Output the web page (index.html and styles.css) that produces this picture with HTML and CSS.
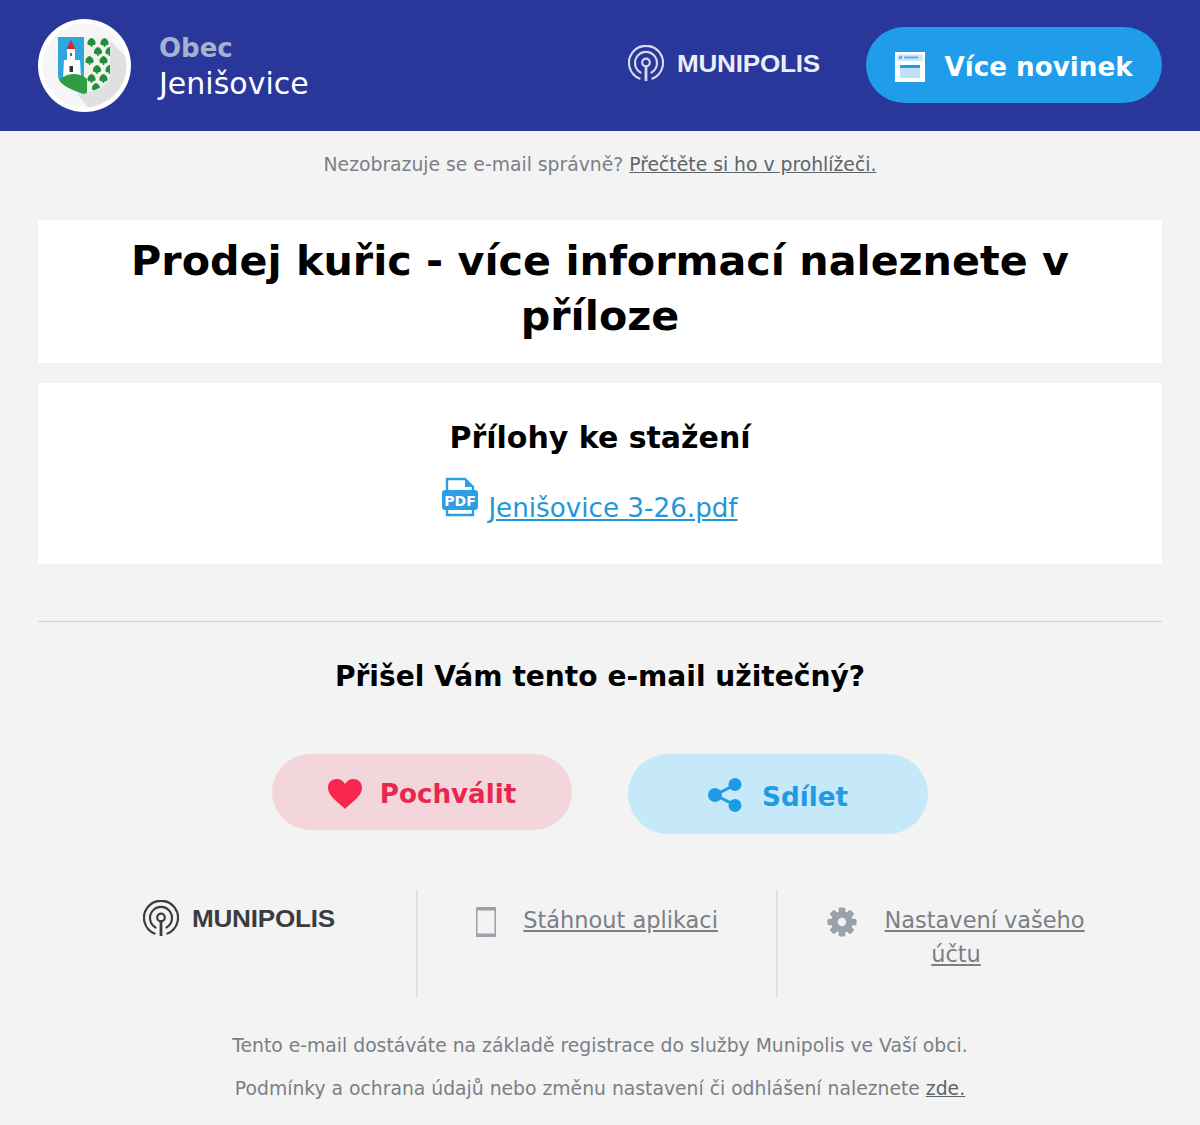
FILE: index.html
```html
<!DOCTYPE html>
<html lang="cs">
<head>
<meta charset="utf-8">
<title>Prodej kuřic</title>
<link rel="stylesheet" href="styles.css">
</head>
<body>
<svg class="sprites" width="0" height="0" aria-hidden="true">
  <defs>
    <symbol id="tree" viewBox="0 0 12 12">
      <path d="M6 0C9 1 11.500 4 11.500 7C11.500 9 9.500 10 7 10V12H5V10C2.500 10 .5 9 .5 7C.5 4 3 1 6 0Z"/>
    </symbol>
    <symbol id="munipolis-mark" viewBox="0 0 36 36">
      <g fill="none" stroke="currentColor" stroke-width="2.200" stroke-linecap="round">
        <path d="M11.500 33.500A17 17 0 1 1 24.500 33.500"/>
        <path d="M12.500 27.500A11 11 0 1 1 23.500 27.500"/>
        <circle cx="18" cy="17.500" r="3.800"/>
        <path d="M18 21.500V35.500" stroke-width="2.800"/>
      </g>
    </symbol>
  </defs>
</svg>

<header class="header">
  <div class="brand">
    <svg class="crest" viewBox="0 0 93 93" width="93" height="93" aria-hidden="true">
      <defs>
        <clipPath id="disc-inner"><circle cx="46.500" cy="46.500" r="42"/></clipPath>
        <clipPath id="shield"><path d="M20 18H72V56C72 66 58 71 46 75C34 71 20 66 20 56Z"/></clipPath>
      </defs>
      <circle cx="46.500" cy="46.500" r="46.500" fill="#fff"/>
      <circle cx="46.500" cy="46.500" r="42" fill="#f6f6f6"/>
      <path clip-path="url(#disc-inner)" d="M72 22L100 50V100H60L40 76Z" fill="#e0e0e0"/>
      <g clip-path="url(#shield)">
        <rect x="20" y="18" width="26" height="58" fill="#2ea8dc"/>
        <rect x="46" y="18" width="26" height="58" fill="#f2f2ea"/>
        <path d="M26 41H42L43 60H25Z" fill="#fff"/>
        <rect x="29" y="29" width="8" height="13" fill="#fff"/>
        <path d="M28.500 30L33 21L37.500 30Z" fill="#d42a2f"/>
        <rect x="31.500" y="47" width="3.500" height="6" fill="#333"/>
        <rect x="32" y="34" width="2" height="3" fill="#666"/>
        <path d="M20 62C28 54 40 52 49 60V76H20Z" fill="#2f9e43"/>
        <g fill="#1f8f3f">
          <use href="#tree" x="49" y="19" width="9" height="9"/>
          <use href="#tree" x="62" y="19" width="9" height="9"/>
          <use href="#tree" x="55.500" y="28" width="9" height="9"/>
          <use href="#tree" x="67" y="28" width="9" height="9"/>
          <use href="#tree" x="47" y="37" width="9" height="9"/>
          <use href="#tree" x="61" y="37" width="9" height="9"/>
          <use href="#tree" x="54.500" y="46" width="9" height="9"/>
          <use href="#tree" x="67" y="46" width="9" height="9"/>
          <use href="#tree" x="49" y="55" width="9" height="9"/>
          <use href="#tree" x="61" y="55" width="9" height="9"/>
          <use href="#tree" x="53.500" y="64" width="9" height="9"/>
        </g>
      </g>
    </svg>
    <div class="brand-text">
      <div class="brand-label">Obec</div>
      <div class="brand-name">Jenišovice</div>
    </div>
  </div>
  <div class="header-right">
    <div class="logo logo-light">
      <svg width="36" height="36" aria-hidden="true"><use href="#munipolis-mark"/></svg>
      <span class="logo-word">MUNIPOLIS</span>
    </div>
    <a class="more-btn" href="#">
      <svg viewBox="0 0 30 30" width="30" height="30" aria-hidden="true">
        <rect width="30" height="30" fill="#fff"/>
        <rect x="2" y="2.500" width="26" height="6.500" fill="#cfe7fa"/>
        <rect x="4" y="4.500" width="3" height="2" fill="#1f9cea"/>
        <rect x="9" y="4.500" width="14" height="2" fill="#1f9cea" opacity=".7"/>
        <rect x="5" y="13" width="20" height="13" fill="#1f9cea"/>
        <rect x="5" y="16" width="20" height="10" fill="#bfe0f8"/>
      </svg>
      <span>Více novinek</span>
    </a>
  </div>
</header>

<main class="page">
  <p class="browser-note">Nezobrazuje se e-mail správně? <a href="#">Přečtěte si ho v prohlížeči.</a></p>

  <section class="card title-card">
    <h1>Prodej kuřic - více informací naleznete v příloze</h1>
  </section>

  <section class="card files-card">
    <h2>Přílohy ke stažení</h2>
    <div class="file-row">
      <svg class="pdf-icon" viewBox="0 0 36 40" width="36" height="40" aria-hidden="true">
        <path fill="none" stroke="#2ba0e6" stroke-width="2.400" d="M5 14V2H23L31 10V14M5 32V38H31V32"/>
        <path fill="#2ba0e6" d="M23 2V10H31Z"/>
        <rect x="0" y="13" width="36" height="20" rx="3" fill="#2ba0e6"/>
        <text class="pdf-label" x="18" y="28.500" text-anchor="middle">PDF</text>
      </svg>
      <a class="file-link" href="#">Jenišovice 3-26.pdf</a>
    </div>
  </section>

  <hr class="rule">

  <h3 class="question">Přišel Vám tento e-mail užitečný?</h3>

  <div class="actions">
    <a class="pill pill-praise" href="#">
      <svg viewBox="0 0 34 30" width="34" height="30" aria-hidden="true">
        <path fill="#f9274f" d="M17 30C13 25 0 18 0 9C0 3 4 0 9 0C12.500 0 15.500 2 17 5C18.500 2 21.500 0 25 0C30 0 34 3 34 9C34 18 21 25 17 30Z"/>
      </svg>
      <span>Pochválit</span>
    </a>
    <a class="pill pill-share" href="#">
      <svg viewBox="0 0 34 34" width="34" height="34" aria-hidden="true">
        <path fill="none" stroke="#1f9be6" stroke-width="3" d="M27 7L7 17L27 27"/>
        <g fill="#1f9be6">
          <circle cx="27" cy="6.500" r="6.500"/><circle cx="7" cy="17" r="7"/><circle cx="27" cy="27.500" r="6.500"/>
        </g>
      </svg>
      <span>Sdílet</span>
    </a>
  </div>

  <div class="footer-cols">
    <div class="fcol-logo">
      <div class="logo logo-dark">
        <svg width="36" height="36" aria-hidden="true"><use href="#munipolis-mark"/></svg>
        <span class="logo-word">MUNIPOLIS</span>
      </div>
    </div>
    <div class="fcol-link">
      <svg class="foot-icon" viewBox="0 0 20 30" width="20" height="30" aria-hidden="true">
        <path fill="#9aa1a9" fill-rule="evenodd" d="M1 0H19A1 1 0 0 1 20 1V29A1 1 0 0 1 19 30H1A1 1 0 0 1 0 29V1A1 1 0 0 1 1 0ZM1.500 3.500V26.500H18.500V3.500Z"/>
      </svg>
      <a class="foot-link" href="#">Stáhnout aplikaci</a>
    </div>
    <div class="fcol-link fcol-settings">
      <svg class="foot-icon" viewBox="0 0 32 32" width="30" height="30" aria-hidden="true">
        <g fill="#9aa1a9">
          <circle cx="16" cy="16" r="11.500"/>
          <rect x="12.500" y=".5" width="7" height="31" rx="1.500"/>
          <rect x="12.500" y=".5" width="7" height="31" rx="1.500" transform="rotate(45 16 16)"/>
          <rect x="12.500" y=".5" width="7" height="31" rx="1.500" transform="rotate(90 16 16)"/>
          <rect x="12.500" y=".5" width="7" height="31" rx="1.500" transform="rotate(135 16 16)"/>
        </g>
        <circle cx="16" cy="16" r="4.500" fill="#f3f3f4"/>
      </svg>
      <a class="foot-link" href="#">Nastavení vašeho účtu</a>
    </div>
  </div>

  <p class="legal">Tento e-mail dostáváte na základě registrace do služby Munipolis ve Vaší obci.</p>
  <p class="legal">Podmínky a ochrana údajů nebo změnu nastavení či odhlášení naleznete <a href="#">zde.</a></p>
</main>
</body>
</html>
```

FILE: styles.css
```css
* { box-sizing: border-box; }

html, body { margin: 0; padding: 0; }

body {
  width: 1200px;
  height: 1125px;
  overflow: hidden;
  background: #f3f3f4;
  font-family: "DejaVu Sans", sans-serif;
  color: #000;
}

a { color: inherit; }

.sprites { position: absolute; }

.header {
  height: 131px;
  background: #29379a;
  padding: 0 38px;
  display: flex;
  align-items: center;
  justify-content: space-between;
}

.brand { display: flex; align-items: center; gap: 28px; }

.crest { display: block; flex: none; }

.brand-text { margin-top: 4px; }
.brand-label { font-size: 26px; font-weight: 700; line-height: 32px; color: #a6b0cf; }
.brand-name { font-size: 30px; line-height: 40px; color: #fff; }

.header-right { display: flex; align-items: center; gap: 46px; padding-bottom: 1px; }

.logo { display: flex; align-items: center; gap: 13px; }
.logo-light { color: #d5d9ec; margin-top: -5px; }
.logo-dark { color: #3a3c3f; }

.logo-word {
  font-family: "Liberation Sans", sans-serif;
  font-weight: 700;
  font-size: 23.5px;
  letter-spacing: -0.2px;
  line-height: 36px;
  width: 143px;
  margin-top: 2px;
  white-space: nowrap;
  transform: scaleX(1.11);
  transform-origin: left center;
}

.logo-light .logo-word { color: #eceef7; }

.more-btn {
  width: 296px;
  height: 76px;
  padding-top: 3px;
  border-radius: 38px;
  background: #1f9cea;
  color: #fff;
  display: flex;
  align-items: center;
  justify-content: center;
  gap: 19px;
  font-size: 26.2px;
  font-weight: 700;
  text-decoration: none;
}

.page { padding: 0 38px; }

.browser-note {
  margin: 0;
  padding-top: 22px;
  height: 89px;
  text-align: center;
  font-size: 18.77px;
  line-height: 24px;
  color: #7a7f85;
}

.browser-note a { color: #5e6368; }

.card { background: #fff; text-align: center; }

.title-card { height: 143px; padding: 14px 70px 0; margin-bottom: 20px; }

h1 {
  margin: 0;
  font-size: 41.25px;
  line-height: 55px;
  font-weight: 700;
}

.files-card { height: 181px; padding-top: 36px; }

h2 {
  margin: 0;
  font-size: 30px;
  line-height: 38px;
  font-weight: 700;
}

.file-row {
  margin-top: 20px;
  padding-right: 20px;
  display: flex;
  justify-content: center;
  align-items: flex-start;
  gap: 10px;
}

.pdf-label { font-family: "DejaVu Sans", sans-serif; font-size: 14px; font-weight: 700; fill: #fff; }

.file-link { font-size: 26.2px; line-height: 38px; margin-top: 12px; color: #1f97d8; }

.rule { margin: 57px 0 0; border: 0; border-top: 1px solid #cfd2d4; }

.question {
  margin: 36px 0 0;
  text-align: center;
  font-size: 28.1px;
  line-height: 38px;
  font-weight: 700;
}

.actions {
  margin-top: 58px;
  display: flex;
  justify-content: center;
  align-items: flex-start;
  gap: 56px;
}

.pill {
  width: 300px;
  border-radius: 40px;
  display: flex;
  align-items: center;
  justify-content: center;
  font-size: 26.2px;
  font-weight: 700;
  text-decoration: none;
}

.pill-praise { height: 76px; gap: 18px; padding-top: 4px; background: #f3d5dc; color: #e8274f; }
.pill-share { height: 80px; gap: 20px; padding-top: 2px; background: #c5e9f8; color: #1f9be6; }
.pill-share span { margin-top: 4px; }

.footer-cols {
  margin-top: 56px;
  height: 107px;
  padding-left: 24px;
  display: flex;
}

.fcol-logo { width: 354px; padding-top: 9px; display: flex; justify-content: center; align-items: flex-start; }

.fcol-link {
  width: 360px;
  padding: 13px 43px 0;
  border-left: 2px solid #dfe0e1;
  text-align: center;
  font-size: 22.46px;
  line-height: 34px;
  color: #7a7f85;
}

.fcol-settings { width: 358px; }

.foot-icon { vertical-align: middle; margin-right: 20px; }

.legal {
  margin: 0;
  text-align: center;
  font-size: 18.77px;
  line-height: 26px;
  color: #7a7f85;
}

.footer-cols + .legal { margin-top: 36px; }
.legal + .legal { margin-top: 17px; }
.legal a { color: #5e6368; }
```
